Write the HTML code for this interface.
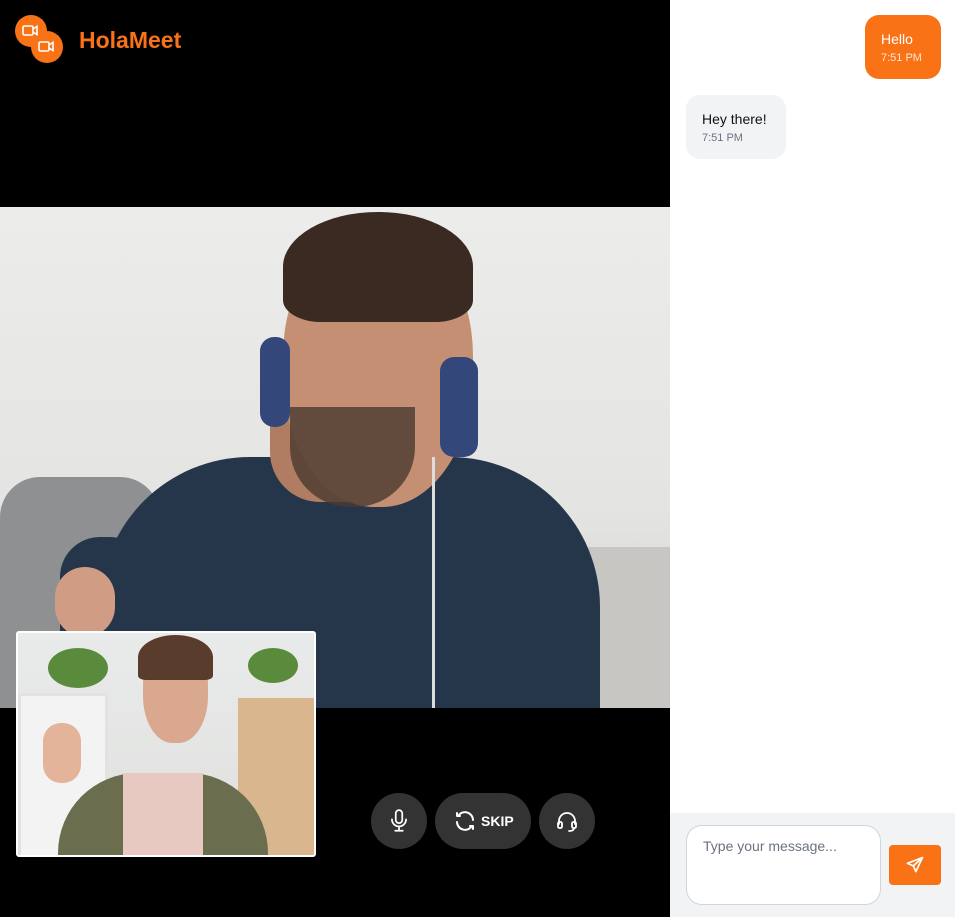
<!DOCTYPE html>
<html><head><meta charset="utf-8"><style>
*{margin:0;padding:0;box-sizing:border-box}
body{width:955px;height:917px;overflow:hidden;background:#000;font-family:"Liberation Sans",sans-serif;position:relative}
.abs{position:absolute}
</style></head><body>
<div class="abs" style="left:15px;top:15px;width:32px;height:32px;border-radius:50%;background:#f97316"></div>
<div class="abs" style="left:31px;top:31px;width:32px;height:32px;border-radius:50%;background:#f97316"></div>
<svg class="abs" style="left:15px;top:15px" width="50" height="50" viewBox="0 0 50 50" fill="none" stroke="#fff" stroke-width="1.6"><rect x="8" y="11" width="10" height="9" rx="1.5"/><path d="M18 14l4-2.5v8l-4-2.5"/><rect x="24" y="27" width="10" height="9" rx="1.5"/><path d="M34 30l4-2.5v8l-4-2.5"/></svg>
<div class="abs" style="left:79px;top:27px;color:#f97316;font-weight:bold;font-size:23px">HolaMeet</div>
<div class="abs" style="left:0;top:207px;width:670px;height:501px;overflow:hidden;background:linear-gradient(180deg,#ececea 0%,#e4e4e2 60%,#cfcfcd 100%)">
 <div class="abs" style="left:0;top:270px;width:160px;height:231px;background:#8e9092;border-radius:40px 40px 0 0"></div>
 <div class="abs" style="left:540px;top:340px;width:130px;height:161px;background:#c8c6c2"></div>
 <div class="abs" style="left:100px;top:250px;width:500px;height:300px;background:#26364a;border-radius:150px 150px 0 0"></div>
 <div class="abs" style="left:60px;top:330px;width:90px;height:171px;background:#26364a;border-radius:40px 40px 0 0"></div>
 <div class="abs" style="left:270px;top:205px;width:140px;height:90px;background:#b07c62;border-radius:0 0 50px 50px"></div>
 <div class="abs" style="left:283px;top:25px;width:190px;height:275px;background:#c48f72;border-radius:45% 45% 48% 48%"></div>
 <div class="abs" style="left:283px;top:5px;width:190px;height:110px;background:#3a2a22;border-radius:50% 50% 20% 20%"></div>
 <div class="abs" style="left:290px;top:200px;width:125px;height:100px;background:#4a3a30;border-radius:0 0 60px 60px;opacity:.8"></div>
 <div class="abs" style="left:260px;top:130px;width:30px;height:90px;background:#34477a;border-radius:14px"></div>
 <div class="abs" style="left:440px;top:150px;width:38px;height:100px;background:#34477a;border-radius:14px"></div>
 <div class="abs" style="left:432px;top:250px;width:3px;height:251px;background:#ddd"></div>
 <div class="abs" style="left:55px;top:360px;width:60px;height:70px;background:#d19c84;border-radius:30px"></div>
</div>
<div class="abs" style="left:16px;top:631px;width:300px;height:226px;border:2px solid #fff;border-radius:3px;overflow:hidden;background:linear-gradient(180deg,#e9ebea,#dfe0de)">
 <div class="abs" style="left:0;top:60px;width:90px;height:170px;background:#f3f3f3;border:3px solid #e2e2e2"></div>
 <div class="abs" style="left:220px;top:65px;width:80px;height:160px;background:#d9b68e"></div>
 <div class="abs" style="left:30px;top:15px;width:60px;height:40px;background:#5a8a3c;border-radius:50%"></div>
 <div class="abs" style="left:230px;top:15px;width:50px;height:35px;background:#5a8a3c;border-radius:50%"></div>
 <div class="abs" style="left:40px;top:140px;width:210px;height:100px;background:#6a6e4e;border-radius:80px 80px 0 0"></div>
 <div class="abs" style="left:105px;top:140px;width:80px;height:90px;background:#e8c9c2"></div>
 <div class="abs" style="left:125px;top:5px;width:65px;height:105px;background:#d9a88e;border-radius:45%"></div>
 <div class="abs" style="left:120px;top:2px;width:75px;height:45px;background:#5a3c2c;border-radius:50% 50% 10% 10%"></div>
 <div class="abs" style="left:25px;top:90px;width:38px;height:60px;background:#e4b49a;border-radius:18px"></div>
</div>
<div class="abs" style="left:371px;top:793px;width:56px;height:56px;border-radius:50%;background:#333"></div>
<svg class="abs" style="left:386px;top:808px" width="26" height="26" viewBox="0 0 24 24" fill="none" stroke="#fff" stroke-width="1.6" stroke-linecap="round"><rect x="9" y="2" width="6" height="12" rx="3"/><path d="M5.5 10.5a6.5 6.5 0 0 0 13 0M12 17v4M8.5 21h7"/></svg>
<div class="abs" style="left:435px;top:793px;width:96px;height:56px;border-radius:28px;background:#333"></div>
<svg class="abs" style="left:453px;top:809px" width="24" height="24" viewBox="0 0 24 24" fill="none" stroke="#fff" stroke-width="2" stroke-linecap="round" stroke-linejoin="round"><path d="M20 11a8 8 0 0 0-14.5-4.5M4 4v3h3M4 13a8 8 0 0 0 14.5 4.5M20 20v-3h-3"/></svg>
<div class="abs" style="left:481px;top:813px;color:#fff;font-weight:bold;font-size:14px">SKIP</div>
<div class="abs" style="left:539px;top:793px;width:56px;height:56px;border-radius:50%;background:#333"></div>
<svg class="abs" style="left:555px;top:809px" width="24" height="24" viewBox="0 0 24 24" fill="none" stroke="#fff" stroke-width="1.8" stroke-linecap="round"><path d="M4 15v-3a8 8 0 0 1 16 0v3"/><rect x="3" y="13" width="4" height="6" rx="1.5"/><rect x="17" y="13" width="4" height="6" rx="1.5"/><path d="M19 19c0 2-2 3-5 3"/></svg>
<div class="abs" style="left:670px;top:0;width:285px;height:917px;background:#fff">
 <div class="abs" style="left:195px;top:15px;width:76px;height:64px;background:#f97316;border-radius:14px;color:#fff;padding:16px 0 0 16px">
  <div style="font-size:14px">Hello</div><div style="font-size:11px;margin-top:5px;color:#ffe8d6">7:51 PM</div></div>
 <div class="abs" style="left:16px;top:95px;width:100px;height:64px;background:#f2f3f5;border-radius:14px;padding:16px 0 0 16px">
  <div style="font-size:14px;color:#111">Hey there!</div><div style="font-size:11px;margin-top:5px;color:#6b7280">7:51 PM</div></div>
 <div class="abs" style="left:0;top:813px;width:285px;height:104px;background:#f2f3f5">
  <div class="abs" style="left:16px;top:12px;width:195px;height:80px;background:#fff;border:1px solid #d1d5db;border-radius:16px;padding:12px 0 0 16px;color:#6b7280;font-size:14px">Type your message...</div>
  <div class="abs" style="left:219px;top:32px;width:52px;height:40px;background:#f97316;border-radius:4px"></div>
  <svg class="abs" style="left:235px;top:42px" width="20" height="20" viewBox="0 0 24 24" fill="none" stroke="#fff" stroke-width="2" stroke-linejoin="round"><path d="M21 3L3 10l7 3 3 7 8-17zM10 13l11-10"/></svg>
 </div>
</div>
</body></html>
